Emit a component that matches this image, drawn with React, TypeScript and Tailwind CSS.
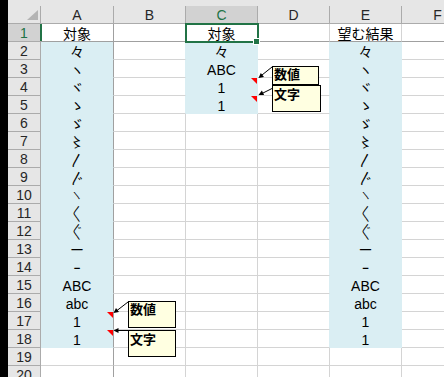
import React from "react";

const MARKS = ["々", "ヽ", "ヾ", "ゝ", "ゞ", "〻", "〳", "〴", "〵", "〱", "〲", "ー", "ｰ", "ABC", "abc", "1", "1"];
const TALL = ["〵", "〱", "〲"];
const COLS = ["A", "B", "C", "D", "E", "F"];
const ROWS = Array.from({ length: 20 }, (_, i) => i + 1);

type CellData = { text?: string; fill?: boolean; note?: boolean };

function cellAt(row: number, col: number): CellData {
  if (col === 0 || col === 4) {
    if (row === 1) return { text: col === 0 ? "対象" : "望む結果" };
    if (row <= 18) return { text: MARKS[row - 2], fill: true, note: col === 0 && row >= 17 };
  }
  if (col === 2) {
    if (row === 1) return { text: "対象" };
    if (row <= 5) return { text: ["々", "ABC", "1", "1"][row - 2], fill: true, note: row >= 4 };
  }
  return {};
}

function Cell({ row, col }: { row: number; col: number }) {
  const c = cellAt(row, col);
  const next = cellAt(row, col + 1);
  const width = col === 0 ? "w-[73px]" : "w-[72px]";
  const right =
    col === 0
      ? "border-r-[#a0a0a0]"
      : c.fill || next.fill
        ? "border-r-[#daeef3]"
        : "border-r-[#d4d4d4]";
  const bottom = row === 1 ? "border-b-[#a0a0a0]" : c.fill ? "border-b-[#daeef3]" : "border-b-[#d4d4d4]";
  const tall = c.text !== undefined && TALL.includes(c.text);

  return (
    <div
      className={`relative flex shrink-0 items-center justify-center border-r border-b pt-[3px] text-[14px] leading-[17px] text-black ${width} ${right} ${bottom} ${
        c.fill ? "bg-[#daeef3]" : "bg-white"
      }`}
    >
      {c.text && (
        <span className={`whitespace-nowrap ${tall ? "inline-block scale-y-[0.55] scale-x-[0.8]" : ""}`}>{c.text}</span>
      )}
      {c.note && (
        <span className="absolute top-0 right-0 h-0 w-0 border-t-[6px] border-l-[6px] border-t-[#ff0000] border-l-transparent" />
      )}
    </div>
  );
}

function NoteBox({ text, className }: { text: string; className: string }) {
  return (
    <div
      className={`absolute border border-black bg-[#ffffe1] pl-[1px] text-[13px] leading-[14px] font-bold text-black ${className}`}
    >
      {text}
    </div>
  );
}

export default function App() {
  return (
    <div className="relative flex h-[377px] w-[444px] overflow-hidden bg-white font-['Liberation_Sans','Noto_Sans_CJK_JP',sans-serif]">
      <div className="w-[8px] shrink-0 bg-black" />

      <div className="flex flex-col">
        {/* column headers */}
        <div className="h-[6px] shrink-0 bg-[#e6e6e6]" />
        <div className="flex h-[18px] shrink-0">
          <div className="relative w-[33px] shrink-0 border-r border-b border-[#ababab] bg-[#e6e6e6]">
            <svg className="absolute top-[4px] left-[19px]" width="11" height="10" viewBox="0 0 11 10">
              <polygon points="11,0 11,10 0,10" fill="#b4b4b4" />
            </svg>
          </div>
          {COLS.map((name, i) => (
            <div
              key={name}
              className={`flex shrink-0 items-center justify-center border-r border-b border-[#ababab] pt-[1px] text-[14px] leading-[17px] ${
                i === 0 ? "w-[73px]" : "w-[72px]"
              } ${i === 2 ? "bg-[#d2d2d2] text-[#217346]" : "bg-[#e6e6e6] text-[#262626]"}`}
            >
              {name}
            </div>
          ))}
        </div>

        {ROWS.map((r) => (
          <div key={r} className="flex h-[18px] shrink-0">
            <div
              className={`flex w-[33px] shrink-0 items-center justify-center border-r border-b border-[#ababab] pt-[2px] text-[14px] leading-[17px] ${
                r === 1 ? "bg-[#d2d2d2] text-[#217346]" : "bg-[#e6e6e6] text-[#262626]"
              }`}
            >
              {r}
            </div>
            {COLS.map((_, c) => (
              <Cell key={c} row={r} col={c} />
            ))}
          </div>
        ))}
      </div>

      {/* selection */}
      <div className="absolute top-[24px] left-[40px] h-[17px] w-[2px] bg-[#217346]" />
      <div className="absolute top-[23px] left-[185px] h-[20px] w-[74px] border-2 border-[#217346]" />
      <div className="absolute top-[38px] left-[253px] h-[7px] w-[7px] border border-white bg-[#217346]" />

      {/* comments */}
      <svg className="pointer-events-none absolute inset-0" width="444" height="377">
        <line x1="128" y1="302" x2="117" y2="310.5" stroke="#000" strokeWidth="1" />
        <polygon points="113.5,313 119,312 116,308" fill="#000" />
        <line x1="128" y1="330.5" x2="118" y2="330.5" stroke="#000" strokeWidth="1" />
        <polygon points="113.5,330.5 118.5,328 118.5,333" fill="#000" />
        <line x1="272" y1="67" x2="262" y2="75" stroke="#000" strokeWidth="1" />
        <polygon points="258.5,78 264,76.9 260.8,73" fill="#000" />
        <line x1="272" y1="88.5" x2="263" y2="93" stroke="#000" strokeWidth="1" />
        <polygon points="258.5,95 264.1,95 261.9,90.5" fill="#000" />
      </svg>
      <NoteBox text="数値" className="top-[66px] left-[272px] h-[19px] w-[47px] pt-[1px]" />
      <NoteBox text="文字" className="top-[85px] left-[272px] h-[27px] w-[49px] pt-[2px]" />
      <NoteBox text="数値" className="top-[301px] left-[128px] h-[27px] w-[48px] pt-[1px]" />
      <NoteBox text="文字" className="top-[330px] left-[128px] h-[27px] w-[48px] pt-[2px]" />
    </div>
  );
}
